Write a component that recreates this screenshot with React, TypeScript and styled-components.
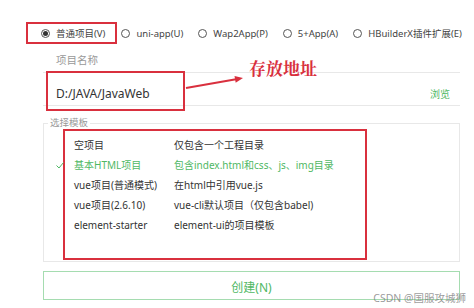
import React from 'react';
import styled, { createGlobalStyle } from 'styled-components';

const Global = createGlobalStyle`
  html, body { margin: 0; padding: 0; background: #fff; }
  body { font-family: "Noto Sans", "Noto Sans CJK SC", sans-serif; color: #333; }
`;

const RED = '#d9303e';
const GREEN = '#4fb864';

const Page = styled.div`
  position: relative;
  width: 474px;
  height: 308px;
  box-sizing: border-box;
  padding: 22px 14px 0 43px;
  display: flex;
  flex-direction: column;
  overflow: hidden;
`;

const RadioRow = styled.div`
  display: flex;
  align-items: center;
  gap: 15px;
  height: 22px;
  margin-left: -17px;
`;

const RadioItem = styled.label<{ $highlight?: boolean }>`
  display: flex;
  align-items: center;
  gap: 6px;
  height: 22px;
  box-sizing: border-box;
  font-size: 9.5px;
  color: #444;
  white-space: nowrap;
  ${(p) =>
    p.$highlight
      ? `border: 2px solid ${RED}; padding: 0 10px 0 13px; margin-right: -11px;`
      : ''}
`;

const RadioDot = styled.span<{ $checked?: boolean }>`
  width: 9px;
  height: 9px;
  box-sizing: border-box;
  border: 1px solid #555;
  border-radius: 50%;
  display: flex;
  align-items: center;
  justify-content: center;
  &::after {
    content: '';
    width: 5px;
    height: 5px;
    border-radius: 50%;
    background: ${(p) => (p.$checked ? '#333' : 'transparent')};
  }
`;

const FieldLabel = styled.div`
  margin-top: 8px;
  padding-left: 13px;
  line-height: 16px;
  font-size: 10.5px;
  color: #999;
`;

const InputWrap = styled.div`
  position: relative;
  margin-top: 4px;
`;

const InputRow = styled.div`
  height: 34px;
  box-sizing: border-box;
  border-top: 1px solid #e8e8e8;
  border-bottom: 1px solid #e8e8e8;
  display: flex;
  align-items: center;
  justify-content: space-between;
  padding: 8px 10px 0 13px;
`;

const PathText = styled.span`
  font-size: 12px;
  color: #333;
`;

const Browse = styled.span`
  font-size: 10px;
  color: ${GREEN};
`;

const AnnotBox = styled.div`
  position: absolute;
  left: 3px;
  top: -1px;
  width: 139px;
  height: 40px;
  box-sizing: border-box;
  border: 2px solid ${RED};
  pointer-events: none;
`;

const AnnotText = styled.div`
  position: absolute;
  left: 206px;
  top: -14px;
  line-height: 20px;
  font-size: 17px;
  font-weight: 700;
  color: ${RED};
  font-family: "Noto Serif CJK SC", "Noto Sans CJK SC", serif;
  white-space: nowrap;
`;

const ArrowSvg = styled.svg`
  position: absolute;
  left: 0;
  top: 0;
  overflow: visible;
  pointer-events: none;
`;

const Fieldset = styled.fieldset`
  margin: 9px 0 0;
  padding: 0;
  border: 1px solid #e8e8e8;
  min-width: 0;
`;

const Legend = styled.legend`
  margin-left: 4px;
  padding: 0 2px;
  font-size: 9.5px;
  line-height: 16px;
  color: #999;
`;

const TemplateList = styled.div`
  width: 304px;
  height: 131px;
  box-sizing: border-box;
  margin: -2px 0 1px 19px;
  padding: 4px 0 0 9px;
  border: 2px solid ${RED};
`;

const TemplateRow = styled.div<{ $active?: boolean }>`
  position: relative;
  display: grid;
  grid-template-columns: 100px 1fr;
  line-height: 20px;
  height: 20px;
  font-size: 10px;
  color: ${(p) => (p.$active ? GREEN : '#333')};
  white-space: nowrap;
`;

const Check = styled.svg`
  position: absolute;
  left: -18px;
  top: 7px;
`;

const CreateButton = styled.button`
  margin-top: 9px;
  height: 29px;
  box-sizing: border-box;
  border: 1px solid #a5dcb0;
  background: #fff;
  color: ${GREEN};
  font-family: inherit;
  font-size: 12px;
  padding: 2px 0 0;
  display: flex;
  align-items: center;
  justify-content: center;
`;

const Watermark = styled.div`
  position: absolute;
  right: 8px;
  bottom: 3px;
  line-height: 14px;
  font-size: 10.5px;
  color: rgba(120, 120, 120, 0.75);
  white-space: nowrap;
`;

const radios = [
  { label: '普通项目(V)', checked: true },
  { label: 'uni-app(U)' },
  { label: 'Wap2App(P)' },
  { label: '5+App(A)' },
  { label: 'HBuilderX插件扩展(E)' },
];

const templates = [
  { name: '空项目', desc: '仅包含一个工程目录' },
  { name: '基本HTML项目', desc: '包含index.html和css、js、img目录', active: true },
  { name: 'vue项目(普通模式)', desc: '在html中引用vue.js' },
  { name: 'vue项目(2.6.10)', desc: 'vue-cli默认项目（仅包含babel)' },
  { name: 'element-starter', desc: 'element-ui的项目模板' },
];

export default function App() {
  return (
    <>
      <Global />
      <Page>
        <RadioRow>
          {radios.map((r) => (
            <RadioItem key={r.label} $highlight={r.checked}>
              <RadioDot $checked={r.checked} />
              {r.label}
            </RadioItem>
          ))}
        </RadioRow>

        <FieldLabel>项目名称</FieldLabel>
        <InputWrap>
          <InputRow>
            <PathText>D:/JAVA/JavaWeb</PathText>
            <Browse>浏览</Browse>
          </InputRow>
          <AnnotBox />
          <ArrowSvg width="417" height="40">
            <line x1="143" y1="16" x2="193" y2="7.2" stroke={RED} strokeWidth="2" />
            <polygon points="200,6 192.7,10.8 191.5,3.9" fill={RED} />
          </ArrowSvg>
          <AnnotText>存放地址</AnnotText>
        </InputWrap>

        <Fieldset>
          <Legend>选择模板</Legend>
          <TemplateList>
            {templates.map((t) => (
              <TemplateRow key={t.name} $active={t.active}>
                {t.active && (
                  <Check width="8" height="7" viewBox="0 0 8 7">
                    <polyline points="0.5,3.5 3,6 7.5,0.5" fill="none" stroke={GREEN} strokeWidth="1" />
                  </Check>
                )}
                <span>{t.name}</span>
                <span>{t.desc}</span>
              </TemplateRow>
            ))}
          </TemplateList>
        </Fieldset>

        <CreateButton>创建(N)</CreateButton>
        <Watermark>CSDN @国服攻城狮</Watermark>
      </Page>
    </>
  );
}
